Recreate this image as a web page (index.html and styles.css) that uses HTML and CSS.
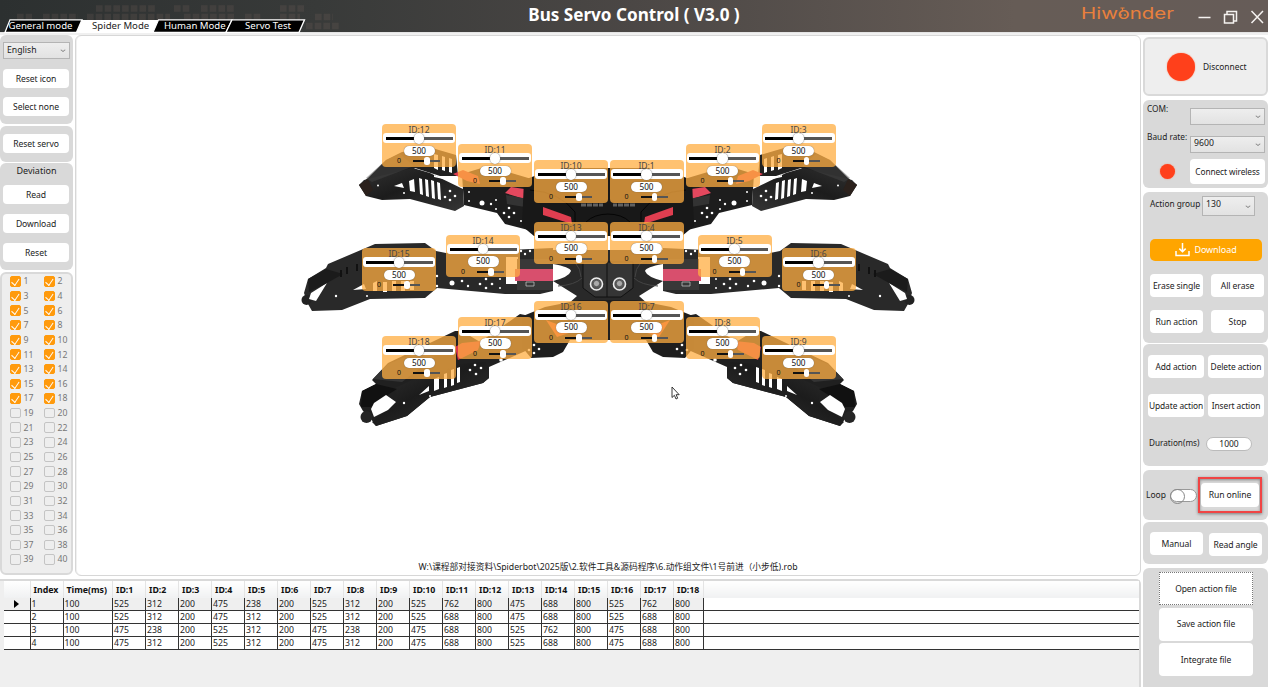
FILE: index.html
```html
<!DOCTYPE html>
<html lang="en">
<head>
<meta charset="utf-8">
<title>Bus Servo Control</title>
<link rel="stylesheet" href="styles.css">
</head>
<body>
<header class="titlebar">
  <svg class="squares" width="340" height="32" viewBox="0 0 340 32">
    <g stroke-width="6.500" stroke-dasharray="6.6 2.1" stroke="#8a7068" fill="none" opacity=".17">
      <path d="M96 8.5H155M174 8.5H190M201 8.5H234M280 8.5H305"/>
      <path d="M17 17H32M43 17H78M87 17H170M184 17H234M245 17H262M280 17H300M315 17H333"/>
      <path d="M306 26H340"/>
    </g>
  </svg>
  <nav class="tabs">
    <svg class="tab-shapes" width="312" height="14" viewBox="0 0 312 14">
      <path d="M82 1H158V14H76Z" fill="#fff"/>
      <g stroke="#fff" stroke-width="1.3">
        <path d="M10 .8H82L76.5 13.3H5Z"/>
        <path d="M158.500 .8H232L226 13.300H153Z"/>
        <path d="M232 .8H304.500L299 13.300H226Z"/>
      </g>
    </svg>
    <a class="tab t1">General mode</a><a class="tab t2 active">Spider Mode</a><a class="tab t3">Human Mode</a><a class="tab t4">Servo Test</a>
  </nav>
  <h1 class="title">Bus Servo Control ( V3.0 )</h1>
  <div class="brand">
    <svg width="100" height="24" viewBox="0 0 100 24">
      <text x="3" y="16" class="logo" textLength="93" lengthAdjust="spacingAndGlyphs">Hiwonder</text>
      <g fill="none" stroke="#e9803d" stroke-width="1.1"><path d="M42.500 5h4M44.500 5.500v3"/></g>
      <circle cx="43" cy="12" r=".9" fill="#e9803d"/><circle cx="47" cy="12" r=".9" fill="#e9803d"/>
    </svg>
  </div>
  <svg class="win" width="68" height="24" viewBox="0 0 68 24" fill="none" stroke="#f5f2f0" stroke-width="1.5">
    <path d="M2.500 12.500H14.500"/>
    <path d="M28.500 9.500H37.500V18H28.500ZM31 9V6.500H40.500V16H38"/>
    <path d="M55.500 6L67 18M67 6L55.500 18"/>
  </svg>
</header>

<div class="layout">
  <aside class="left">
    <section class="panel p-lang">
      <div class="select">English<i></i></div>
      <button>Reset icon</button>
      <button>Select none</button>
    </section>
    <section class="panel p-servo"><button>Reset servo</button></section>
    <section class="panel p-dev">
      <div class="heading">Deviation</div>
      <button>Read</button>
      <button>Download</button>
      <button>Reset</button>
    </section>
    <section class="panel checks" id="checks"></section>
  </aside>

  <main class="canvas" id="canvas">
    <svg class="robot" width="640" height="330" viewBox="290 110 640 330">
      <defs>
        <linearGradient id="metal" x1="0" y1="0" x2="1" y2="1">
          <stop offset="0" stop-color="#333"/><stop offset=".45" stop-color="#1c1c1c"/><stop offset="1" stop-color="#353535"/>
        </linearGradient>
        <g id="half">
          <!-- upper leg -->
          <path fill="#202020" d="M359 185L368 178 386 160 402 152 432 148 456 155 458 176 440 176 415 168 385 190Z"/>
          <path fill="#fff" d="M434 154l4 1v15l-4-2zM442 156l3 1v14l-3-1zM449 158l3 1v14l-3-1z"/>
          <path fill="#1d1d1d" d="M462 174L488 166 535 180 536 232 505 224 497 213 464 205Z"/>
          <path fill="url(#metal)" d="M359 185L364 180 413 168 430 173 463 189 464 206 455 211 410 199 382 200 366 196Z"/>
          <path fill="#2b211c" d="M359 185L368 179 373 190 366 196Z"/>
          <path fill="#484848" d="M366 178L386 160 400 154 414 166 372 182Z" opacity=".45"/>
          <path fill="#fff" d="M394 186L402 183 404 188ZM409 181L414 179 415 192 410 191ZM419 178l3 1 1 16-3-1zM425 179l3 1 1 17-3-1zM431 180l3 1 1 18-3-1zM437 182l3 1 1 17-3-1zM434 175L448 180 434 177Z"/>
          <path fill="#df3e50" d="M453 174L463 170 478 176 480 184 467 181Z"/>
          <path fill="#fff" d="M464 213L464 208 497 215 506 226 500 226Z"/>
          <path fill="#e4485e" d="M505 193L511 187 531 190 532 192 530 206 525 208 521 198Z"/>
          <path fill="#333" d="M506 195L528 199 525 207 507 204Z"/>
          <!-- upper body -->
          <path fill="#181818" d="M524 180L545 172 570 168 609 168V236H534L522 226Z"/>
          <path fill="#df3e50" d="M543 207L571 217 572 224 543 215Z"/>
          <path fill="none" stroke="#050505" d="M530 190Q560 192 575 212V222M586 222Q594 214 609 214"/>
          <path fill="none" stroke="#606060" stroke-width="3" stroke-dasharray="5 1" d="M581 205H603"/>
          <!-- middle leg -->
          <path fill="#292929" d="M308 279L326 268 328 264 375 244 425 243 436 251 446 253 553 248V294H505L437 288 425 298 370 299 342 310 312 311 308 304 304 293Z"/>
          <circle cx="306.500" cy="300" r="5" fill="#222"/>
          <path fill="#fff" d="M327 283L311 293 309 299 316 301ZM353 290l11-6 2 5zM373 283l4-2v10h-4zM383 282h4v10h-4zM392 281h4v10h-4zM401 281h4v10h-4zM410 281h4v9h-4z"/>
          <path fill="#1b1b1b" d="M308 279L326 269 343 274 327 283 309 292Z"/>
          <path stroke="#111" stroke-width="2" fill="none" d="M341 270v7M347 267v7M357 264v7M364 262v7"/>
          <path fill="#fff" d="M506 257H518V284H506Z"/>
          <path fill="#383838" d="M517 259H553V269H517ZM517 281H553V290H517Z"/>
          <path fill="#d84f6d" d="M515 269H553V281H515Z"/>
          <path fill="none" stroke="#bbb" stroke-width=".8" d="M526 282h8v4h-8z"/>
          <!-- middle body -->
          <path fill="#292929" d="M553 250H609V305H567L577 296 553 281Z"/>
          <path fill="#fff" d="M553 264Q570 267 571 271 569 277 553 281ZM553 291L560 288 568 296 562 301H540V294Z"/>
          <path fill="#353535" stroke="#111" d="M583 262H609V297H595L583 288Z"/>
          <path fill="none" stroke="#444" d="M558 286Q575 285 582 278M562 257Q580 260 581 277"/>
          <circle cx="596.500" cy="284" r="6" fill="#555" stroke="#eee" stroke-width="1.600"/>
          <circle cx="596.500" cy="283.500" r="3.200" fill="#aaa" stroke="#555"/>
          <!-- lower leg -->
          <path fill="#202020" d="M359 404L362 391 376 384 372 380 388 363 455 331 462 331 480 342 520 314 535 317 539 345 489 367 489 378 483 383 430 397 407 416 376 426 371 419 363 411Z"/>
          <path fill="url(#metal)" d="M395 388L445 365 486 362 489 378 483 383 430 397 407 416 376 426 372 422 397 401Z"/>
          <path fill="#111" d="M362 391L376 384 397 389 386 396 371 407 361 407Z"/>
          <path fill="#353535" d="M373 379L388 364 418 352 435 357 402 382Z"/>
          <circle cx="366.500" cy="417" r="6" fill="#252525"/>
          <path fill="#fff" d="M371 409L374 403 386 395 396 402 388 410 374 417ZM419 395L429 386 429 391ZM434 379l5-2v12l-5 2zM444 374l3-1v14l-3 1zM451 370l3-1v16l-3 1zM457 368l3-1v15l-3 1z"/>
          <path fill="#d8364b" d="M455 347L462 343 481 341 478 350 458 360Z"/>
          <!-- lower body -->
          <path fill="#1e1e1e" d="M523 316L545 307 580 300H609V340H570L563 352 553 357 531 358 522 347Z"/>
          <path fill="#e34c38" d="M546 320L575 331 557 337Z"/>
          <path fill="#fff" d="M572 343H606V348H572Z"/>
          <g fill="#fff">
            <circle cx="378" cy="185.500" r="1"/><circle cx="404" cy="193" r="1"/>
            <circle cx="450" cy="191" r="1.300"/><circle cx="450" cy="200" r="1.300"/><circle cx="445" cy="197" r="1.300"/><circle cx="455" cy="196" r="1.300"/>
            <circle cx="469" cy="192" r="1"/><circle cx="469" cy="201" r="1"/><circle cx="482" cy="203" r="2.500"/><circle cx="491" cy="204" r="1.200"/><circle cx="496" cy="200" r="1"/><circle cx="496" cy="209" r="1"/>
            <circle cx="509" cy="208" r="1.300"/><circle cx="509" cy="217" r="1.300"/><circle cx="504" cy="213" r="1.300"/><circle cx="514" cy="213" r="1.300"/><circle cx="521" cy="221" r="1"/>
            <circle cx="336" cy="296" r="1.200"/><circle cx="367" cy="296" r="1"/><circle cx="437" cy="276" r="1.200"/><circle cx="437" cy="286" r="1.200"/><circle cx="452" cy="283" r="2.500"/><circle cx="462" cy="281" r="1.300"/><circle cx="468" cy="286" r="1.200"/>
            <circle cx="486" cy="279" r="1.300"/><circle cx="486" cy="288" r="1.300"/><circle cx="480" cy="284" r="1.300"/><circle cx="492" cy="284" r="1.300"/><circle cx="500" cy="279" r="1"/><circle cx="500" cy="288" r="1"/>
            <circle cx="525" cy="247" r="1.200"/><circle cx="525" cy="254" r="1.200"/><circle cx="521" cy="251" r="1.200"/><circle cx="530" cy="251" r="1.200"/>
            <circle cx="404" cy="403" r="1.200"/><circle cx="430" cy="396" r="1"/>
            <circle cx="475" cy="365" r="1.300"/><circle cx="476" cy="374" r="1.300"/><circle cx="470" cy="370" r="1.300"/><circle cx="481" cy="368" r="1.300"/>
            <circle cx="501" cy="360" r="1.800"/><circle cx="516" cy="357" r="1"/><circle cx="534" cy="345" r="1.300"/><circle cx="534" cy="353" r="1.300"/><circle cx="529" cy="350" r="1.300"/><circle cx="539" cy="349" r="1.300"/>
          </g>
        </g>
      </defs>
      <use href="#half"/>
      <use href="#half" transform="translate(1216 0) scale(-1 1)"/>
    </svg>
    <svg class="cursor" width="10" height="15" viewBox="0 0 10 15"><path d="M1 1V11.500L3.400 9.300 5 13 6.700 12.200 5.100 8.700H8.200Z" fill="#fff" stroke="#222" stroke-width=".9"/></svg>
    <p class="path">W:\课程部对接资料\Spiderbot\2025版\2.软件工具&amp;源码程序\6.动作组文件\1号前进（小步低).rob</p>
  </main>

  <section class="grid-area">
    <table class="grid" id="grid"></table>
  </section>

  <aside class="right">
    <section class="panel status"><span class="dot big"></span>Disconnect</section>
    <section class="panel com">
      <label>COM:</label><div class="select"><i></i></div>
      <label>Baud rate:</label><div class="select">9600<i></i></div>
      <span class="dot small"></span><button>Connect wireless</button>
    </section>
    <section class="panel group">
      <div class="group-row"><label>Action group</label><div class="select">130<i></i></div></div>
      <button class="primary">
        <svg width="15" height="14" viewBox="0 0 15 14" fill="none" stroke="#fff" stroke-width="1.500"><path d="M1 8V12.600H14V8M7.500 0V8.500M4.300 5.600L7.500 8.800 10.700 5.600"/></svg>Download</button>
      <div class="pair"><button>Erase single</button><button>All erase</button></div>
      <div class="pair"><button>Run action</button><button>Stop</button></div>
    </section>
    <section class="panel edit">
      <div class="pair"><button>Add action</button><button>Delete action</button></div>
      <div class="pair"><button>Update action</button><button>Insert action</button></div>
      <div class="duration"><label>Duration(ms)</label><span class="field">1000</span></div>
    </section>
    <section class="panel run"><label>Loop</label><span class="toggle"></span><div class="marked"><button>Run online</button></div></section>
    <section class="panel manual"><button>Manual</button><button>Read angle</button></section>
    <section class="panel files"><button class="focus">Open action file</button><button>Save action file</button><button>Integrate file</button><span class="stub"></span></section>
  </aside>
</div>
<script src="app.js"></script>
</body>
</html>
```
FILE: styles.css
```css
* { box-sizing: border-box; }
body { margin: 0; width: 1268px; height: 687px; overflow: hidden; background: #fff; font: 9px/12px "Noto Sans", "Open Sans", "Noto Sans CJK SC", sans-serif; color: #222; }
button { font: inherit; font-size: 8.6px; letter-spacing: -.08px; color: #222; background: #fff; border: 0; border-radius: 4px; padding: 0; white-space: nowrap; display: flex; align-items: center; justify-content: center; }
label { font-size: 8.5px; white-space: nowrap; }

.titlebar { position: relative; height: 32px; display: flex; background: linear-gradient(90deg, #2c3030 0, #383a39 25%, #4b4745 50%, #665c56 80%, #665c58 100%); }
.squares { position: absolute; left: 0; top: 0; }
.tabs { position: relative; width: 312px; height: 14px; margin-top: 19px; display: flex; z-index: 1; color: #fff; font-size: 9.6px; line-height: 13px; }
.tab-shapes { position: absolute; left: 0; top: 0; }
.tab { position: relative; white-space: nowrap; }
.t1 { width: 83px; padding-left: 8.5px; }
.t2 { width: 81px; padding-left: 9px; color: #222; }
.t3 { width: 81px; }
.title { margin: 0; width: 220px; margin-left: 212px; font-size: 17.1px; line-height: 29px; color: #fff; white-space: nowrap; text-align: center; }
.brand { margin: 3px 0 0 334px; height: 24px; width: 100px; }
.brand svg { display: block; }
.logo { font: 400 15.5px Inter, sans-serif; fill: #e9803d; }
.win { margin: 5px 0 0 18px; }

.layout { height: 655px; padding-top: 2px; display: grid; grid-template-columns: 75px 1066px 127px; grid-template-rows: 541px 1fr; row-gap: 2px; border-top: 1px solid #e4e4e4; box-shadow: inset 0 2px #f0f0f0; }
.panel { background: #d9d9d9; border-radius: 6px; }
.left { width: 73px; display: flex; flex-direction: column; gap: 2px; }
.left button { height: 19px; width: 66px; }
.select { position: relative; border: 1px solid #b4b4b4; background: linear-gradient(#eee, #e2e2e2); padding-left: 3px; font-size: 8.7px; line-height: 14px; }
.select i { position: absolute; right: 4px; top: 4.5px; width: 4px; height: 4px; border: solid #777; border-width: 0 1px 1px 0; transform: scale(.9, .65) rotate(45deg); }
.p-lang { height: 89px; padding: 7px 3px; display: flex; flex-direction: column; gap: 10px; }
.p-lang .select { width: 67px; height: 17px; }
.p-lang button:last-child { margin-top: -1px; }
.p-servo { height: 36px; padding: 8px 3px; }
.p-dev { height: 107px; padding: 2px 3px; display: flex; flex-direction: column; gap: 10px; margin-top: -1px; }
.heading { height: 10px; text-align: center; line-height: 12px; font-size: 9px; }
.checks { height: 303px; background: #eee; border: 2px solid #d9d9d9; padding: 0 0 0 8px; display: grid; grid-template-columns: 34px 34px; grid-auto-rows: 14.65px; align-content: start; color: #777; font-size: 8.7px; }
.check { display: flex; align-items: center; gap: 3px; }
.box { width: 10.5px; height: 10.5px; border: 1px solid #c4c4c4; border-radius: 2px; display: block; flex: none; }
.box.on { background: #ff9a0c; border-color: #ff9a0c; position: relative; }
.box.on::after { content: ""; position: absolute; left: 2.2px; top: 0; width: 3.8px; height: 6.6px; border: solid #fff; border-width: 0 1.3px 1.3px 0; transform: rotate(42deg) skewX(8deg); }

.canvas { position: relative; border: 1px solid #d7d7d7; border-radius: 6px; box-shadow: inset 1px 0 #f0f0f0; background: #fff; display: flex; justify-content: center; align-items: flex-end; }
.robot { position: absolute; left: 214px; top: 74px; }
.cursor { position: absolute; left: 595px; top: 350px; }
.path { margin: 0 0 2px; font-size: 8.72px; line-height: 12px; width: 380px; text-align: center; white-space: nowrap; }
.servo { position: absolute; width: 74px; height: 42.5px; border-radius: 4px; background: rgba(255, 174, 65, .75); }
.servo b { display: block; font-weight: 400; font-size: 8.5px; line-height: 11px; height: 9px; text-align: center; color: #464646; }
.rail { position: relative; margin: 0 1px; height: 10px; border-radius: 3px; background: linear-gradient(90deg, #000 50%, #555 50%) 2.5px 4px / 67px 3px no-repeat #fff; }
.rail::after { content: ""; position: absolute; left: 30.5px; top: 0; width: 10.5px; height: 10.5px; border-radius: 50%; background: #fff; box-shadow: 0 0 1.5px #555; }
.value { display: block; width: 31px; height: 10.5px; margin: 2.5px auto 0; border-radius: 6px; background: #fff; box-shadow: 0 0 1px #555; font-size: 8.2px; line-height: 10.5px; text-align: center; color: #111; }
.fine { display: flex; align-items: center; height: 10px; padding-left: 15px; font-size: 7px; line-height: 8px; color: #111; }
.fine i { position: relative; width: 27px; height: 2px; margin-left: 12px; background: linear-gradient(90deg, #111 45%, #555 45%); }
.fine i::after { content: ""; position: absolute; left: 11px; top: -3px; width: 5.5px; height: 8px; border-radius: 2.5px; background: #fff; }

.grid-area { grid-column: 1 / 3; grid-row: 2; margin-top: 1px; background: #efefef; border: 2px solid #d9d9d9; border-left: 0; border-bottom: 0; border-radius: 0 5px 0 0; padding-left: 4px; }
.grid { width: 1135px; border-collapse: collapse; table-layout: fixed; background: #fff; font-size: 8.7px; }
.grid th { height: 17px; padding: 1px 0 0 3px; text-align: left; line-height: 15px; font-size: 8.8px; color: #111; white-space: nowrap; background: linear-gradient(#fff, #f0f1f2); border-right: 1px solid #e4e4e4; }
.grid td { height: 12.9px; padding: 0 0 0 1px; line-height: 11px; border-bottom: 1px solid #333; border-right: 1px solid #333; }
.grid td:last-child, .grid th:last-child { border-right: 0; }
.grid .current td:not(:last-child) { background: #efefef; }
.grid .mark { display: block; margin-left: 9px; border: solid transparent; border-width: 4px 0 4px 5px; border-left-color: #000; width: 0; }

.right { grid-column: 3; grid-row: 1 / 3; margin: 2px 0 0 2px; display: flex; flex-direction: column; }
.right .panel { flex: none; border-radius: 6px; }
.dot { display: block; border-radius: 50%; background: #ff401b; box-shadow: 0 0 1.5px #ff8060; }
.big { width: 28px; height: 28px; }
.small { width: 15px; height: 15px; margin: 5px 0 0 13px; }
.status { height: 59px; border: 2px solid #d9d9d9; background: #eee !important; display: flex; align-items: center; gap: 8px; padding-left: 22px; font-size: 8.4px; }
.com { height: 88px; margin-top: 4px; padding: 8px 0 0 4px; display: grid; grid-template-columns: 43px 75px; grid-template-rows: 28px 23px 25px; }
.com label { margin-top: -5px; font-size: 8.3px; }
.com .select { height: 17px; line-height: 13px; }
.com button { height: 25px; font-size: 8.3px; }
.group { height: 151px; margin-top: 4px; padding: 4px 0 0 7px; }
.group-row { display: flex; height: 20px; gap: 4px; }
.group-row label { width: 48px; margin-top: 2px; font-size: 8.3px; }
.group-row .select { width: 53px; }
.group-row i { top: 7px; }
.primary { width: 112px; height: 22px; margin-top: 23px; background: #ffa500; color: #fff; gap: 4px; font-size: 9px; border-radius: 5px; }
.pair { display: flex; gap: 8px; }
.group .pair { margin-top: 13px; }
.group .pair button { width: 53px; height: 23px; }
.edit { height: 122px; margin-top: 1px; padding: 11px 0 0 5px; }
.edit .pair { gap: 4px; margin-bottom: 16px; }
.edit .pair button { width: 56px; height: 23px; font-size: 8.4px; }
.duration { display: flex; align-items: center; gap: 8px; margin-top: 20px; }
.duration label { width: 50px; padding-left: 1px; margin-top: -3px; font-size: 8.2px; }
.field { width: 46px; height: 14px; border-radius: 7px; background: #fff; border: 1px solid #bbb; text-align: center; line-height: 12px; font-size: 8.5px; }
.run { height: 50px; margin-top: 4px; padding-left: 3px; display: flex; align-items: center; }
.run label { width: 24px; }
.toggle { width: 27px; height: 13px; border: 1px solid #999; border-radius: 7px; background: #fff; }
.toggle::before { content: ""; display: block; width: 13px; height: 13px; margin: -1px 0 0 -1px; border-radius: 50%; border: 1px solid #888; }
.marked { width: 64px; height: 36px; margin: 0 0 0 1px; border: 2px solid #f04444; padding: 4px 1px; box-shadow: 0 1px 3px #777, inset 0 1px 3px #888; }
.marked button { width: 58px; height: 24px; }
.manual { height: 42px; margin-top: 2px; padding: 10px 0 0 7px; display: flex; gap: 6px; }
.manual button { width: 53px; height: 23px; }
.manual button + button { margin-top: 1px; }
.files { height: 125px; margin-top: 4px; padding: 4px 0 0 16px; display: flex; flex-direction: column; gap: 2.5px; }
.files button { width: 94px; height: 33px; flex: none; font-size: 8.5px; }
.files .focus { border: 1px dotted #777; border-radius: 0; }
.stub { width: 34px; height: 12px; margin: 8px 0 0 57px; border-radius: 6px; background: #999; }
```
FILE: app.js
```js
const servos = [
  [12, 382, 124], [11, 458, 144], [10, 534, 160], [1, 609.5, 160], [2, 685.5, 144], [3, 761.5, 124],
  [15, 362, 248], [14, 446, 234.5], [13, 534, 221.5], [4, 609.5, 221.5], [5, 697.5, 234.5], [6, 781.5, 248],
  [18, 382, 336], [17, 458, 316.5], [16, 534, 300.5], [7, 609.5, 300.5], [8, 685.5, 316.5], [9, 761.5, 336]
];
document.getElementById('canvas').insertAdjacentHTML('beforeend', servos.map(([id, x, y]) =>
  `<div class="servo" style="left:${x - 76}px;top:${y - 36}px"><b>ID:${id}</b><div class="rail"></div><span class="value">500</span><div class="fine">0<i></i></div></div>`
).join(''));

let checks = '';
for (let i = 1; i <= 40; i++) checks += `<div class="check"><span class="box${i <= 18 ? ' on' : ''}"></span>${i}</div>`;
document.getElementById('checks').innerHTML = checks;

const rows = [
  [525, 312, 200, 475, 238, 200, 525, 312, 200, 525, 762, 800, 475, 688, 800, 525, 762, 800],
  [525, 312, 200, 475, 312, 200, 525, 312, 200, 525, 688, 800, 475, 688, 800, 525, 688, 800],
  [475, 238, 200, 525, 312, 200, 475, 238, 200, 475, 688, 800, 525, 762, 800, 475, 688, 800],
  [475, 312, 200, 525, 312, 200, 475, 312, 200, 475, 688, 800, 525, 688, 800, 475, 688, 800]
];
const widths = [26, 33, 49.5, ...Array(17).fill(33), 30];
let html = '<colgroup>' + widths.map(w => `<col style="width:${w}px">`).join('') + '<col></colgroup><tr><th></th><th>Index</th><th>Time(ms)</th>';
for (let i = 1; i <= 18; i++) html += `<th>ID:${i}</th>`;
html += '<th></th></tr>';
rows.forEach((r, i) => {
  html += `<tr${i ? '' : ' class="current"'}><td>${i ? '' : '<span class="mark"></span>'}</td><td>${i + 1}</td><td>100</td>` + r.map(v => `<td>${v}</td>`).join('') + '<td></td></tr>';
});
document.getElementById('grid').innerHTML = html;
```
